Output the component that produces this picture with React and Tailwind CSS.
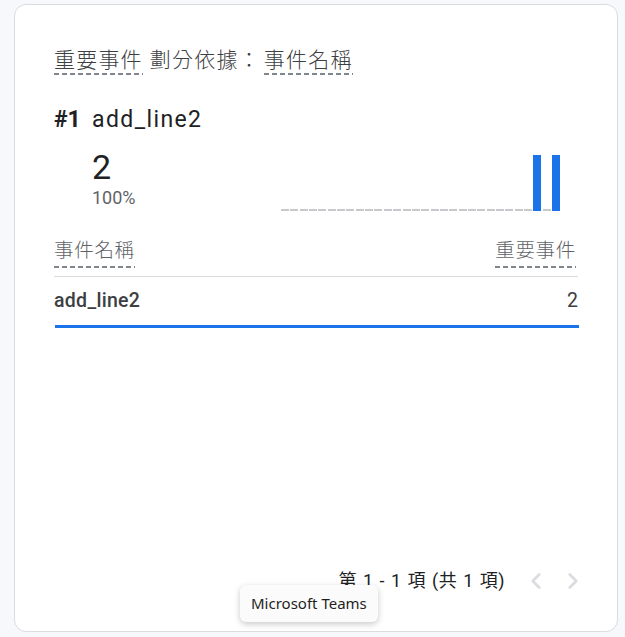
import React from 'react';
import { ChevronLeft, ChevronRight } from 'lucide-react';

const FONT = '"Roboto", "Noto Sans CJK TC", sans-serif';

// dashed underline used under the dimension / metric labels
const Dashed = ({ children, className = '', lineClass = '-bottom-[1px]' }) => (
  <span className={`relative inline-block ${className}`}>
    {children}
    <span className={`absolute left-0 right-0 h-[2px] bg-[repeating-linear-gradient(90deg,#80868b_0_5px,transparent_5px_8px)] ${lineClass}`} />
  </span>
);

const SLOTS = Array.from({ length: 30 }, (_, i) => (i === 27 || i === 29 ? 56 : 0));

export default function App() {
  return (
    <div className="min-h-screen bg-[#f6f8fb] pl-[14px] pr-[7px] pt-[4px] pb-[5px]" style={{ fontFamily: FONT }}>
      <div className="relative h-[628px] rounded-[12px] border border-[#dadce0] bg-white px-[39px] pt-[41px] flex flex-col">
        {/* title */}
        <div className="text-[21px] leading-[28px] tracking-[1.2px] font-light text-[#3c4043] flex items-center">
          <Dashed>重要事件</Dashed>
          <span className="ml-[7px]">劃分依據：</span>
          <Dashed className="ml-[3px]">事件名稱</Dashed>
        </div>

        {/* top item */}
        <div className="mt-[31px] flex items-baseline text-[23px] leading-[30px] text-[#202124]">
          <span className="font-bold w-[38px]">#1</span>
          <span className="tracking-[1.4px]">add_line2</span>
        </div>

        <div className="mt-[12px] flex items-end">
          <div className="ml-[38px] flex flex-col">
            <span className="text-[34px] leading-[40px] text-[#202124]">2</span>
            <span className="text-[18px] leading-[22px] text-[#5f6368]">100%</span>
          </div>
          <div className="ml-auto mr-[18px] mb-[-2px] flex items-end gap-[1.35px]">
            {SLOTS.map((h, i) =>
              h ? (
                <div key={i} className="w-[8px] h-[56px] bg-[#1a73e8]" />
              ) : (
                <div key={i} className="w-[8px] h-[2px] bg-[#c8c9cc]" />
              )
            )}
          </div>
        </div>

        {/* table */}
        <div className="mt-[29px] flex justify-between text-[19.5px] leading-[26px] tracking-[0.7px] font-light text-[#5f6368] border-b border-[#dadce0] pb-[12px]">
          <Dashed lineClass="-bottom-[4px]">事件名稱</Dashed>
          <Dashed className="mr-[2px]" lineClass="-bottom-[4px]">重要事件</Dashed>
        </div>
        <div className="flex justify-between items-center h-[48px] text-[19.5px] text-[#3c4043]">
          <span className="font-medium tracking-[0.3px]">add_line2</span>
          <span>2</span>
        </div>
        <div className="h-[3px] bg-[#1a73e8] ml-[1px] mr-[-1px]" />

        {/* pagination */}
        <div className="mt-auto mb-[37px] flex items-center justify-end text-[18px] text-[#202124]">
          <span className="tracking-[0.5px] [word-spacing:1px]">第 1 - 1 項 (共 1 項)</span>
          <ChevronLeft className="ml-[18px] w-[26px] h-[26px] text-[#dadce0]" strokeWidth={2.5} />
          <ChevronRight className="ml-[11px] mr-[-8px] w-[26px] h-[26px] text-[#dadce0]" strokeWidth={2.5} />
        </div>

        {/* hover tooltip */}
        <div
          className="absolute left-[225px] top-[580px] rounded-[6px] bg-[#fbfbfb] px-[11px] py-[7px] text-[15px] text-[#1f1f1f] shadow-[0_2px_6px_rgba(0,0,0,0.22)]"
          style={{ fontFamily: '"Noto Sans", "Open Sans", sans-serif' }}
        >
          Microsoft Teams
        </div>
      </div>
    </div>
  );
}
